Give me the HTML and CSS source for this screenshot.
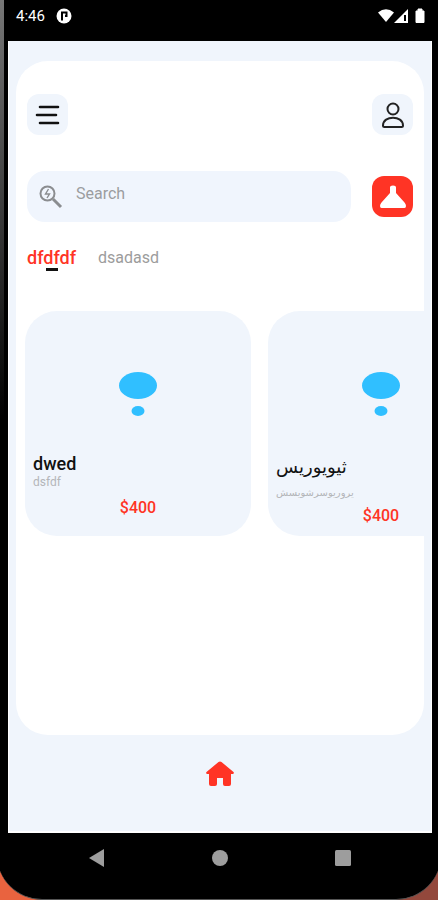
FILE: index.html
```html
<!DOCTYPE html>
<html lang="en">
<head>
<meta charset="utf-8">
<meta name="viewport" content="width=device-width, initial-scale=1">
<title>Shop</title>
<link rel="stylesheet" href="styles.css">
</head>
<body>
<div class="device">
  <header class="status">
    <span class="status-left">
      <span>4:46</span>
      <svg width="16" height="16" viewBox="0 0 16 16" aria-hidden="true"><circle cx="8" cy="8" r="7.500" fill="#fff"/><path d="M6 12.500V4.500h4.500v3.500H9" fill="none" stroke="#000" stroke-width="2"/></svg>
    </span>
    <svg width="48" height="16" viewBox="0 0 48 16" fill="#fff" aria-hidden="true"><path d="M0 4.500Q8-2 16 4.500L8 14Z"/><path d="M16 15L30 1v14Z"/><path d="M27 7v6" stroke="#000" stroke-width="2"/><path d="M38 3h2V1h4v2h2v11.500h-8Z" stroke="#fff" stroke-linejoin="round"/></svg>
  </header>
  <div class="screen">
    <main class="panel">
      <div class="row top">
        <button class="tile" type="button" aria-label="Menu"><svg width="25" height="20" viewBox="0 0 25 20" fill="none" stroke="#111" stroke-width="2.600" stroke-linecap="round"><path d="M5 2h18M2 10h19M5 18h18"/></svg></button>
        <button class="tile" type="button" aria-label="Profile"><svg width="22" height="26" viewBox="0 0 22 26" fill="none" stroke="#222" stroke-width="2"><circle cx="11" cy="7" r="5.500"/><path d="M1 23.500C1 13 21 13 21 23.500Q21 25 19.500 25h-17Q1 25 1 23.500Z"/></svg></button>
      </div>
      <div class="row find">
        <label class="search">
          <svg width="24" height="24" viewBox="0 0 24 24" fill="none" stroke="#8b8d90" aria-hidden="true"><circle cx="8.500" cy="8.500" r="7" stroke-width="2"/><path d="M14 14l8 8" stroke-width="3"/><path d="M9.500 4L6.500 9h4L8 13" stroke-width="1.400"/></svg>
          <input type="search" placeholder="Search" aria-label="Search">
        </label>
        <button class="tile accent" type="button" aria-label="Filter"><svg width="26" height="24" viewBox="0 0 26 24" fill="#fff"><path d="M10 2.500Q10 .5 13 .5t3 2V8l8.500 9.500q1.500 1.500 1.500 3.500Q26 23 24.500 23h-23Q0 23 0 21q0-2 1.500-3.500L10 8Z"/></svg></button>
      </div>
      <nav class="tabs">
        <a class="tab active" href="#one">dfdfdf</a>
        <a class="tab" href="#two">dsadasd</a>
      </nav>
      <section class="cards">
        <article class="card">
          <svg class="art" width="38" height="46" viewBox="0 0 38 46" fill="#30bfff" aria-hidden="true"><ellipse cx="19" cy="13.500" rx="19" ry="13.500"/><ellipse cx="19" cy="39" rx="6.500" ry="5"/></svg>
          <h2>dwed</h2>
          <p class="note">dsfdf</p>
          <p class="price">$400</p>
        </article>
        <article class="card">
          <svg class="art" width="38" height="46" viewBox="0 0 38 46" fill="#30bfff" aria-hidden="true"><ellipse cx="19" cy="13.500" rx="19" ry="13.500"/><ellipse cx="19" cy="39" rx="6.500" ry="5"/></svg>
          <h2 class="arabic" lang="ar">ثيويوريس</h2>
          <p class="note arabic" lang="ar">يروريوسرشويسش</p>
          <p class="price">$400</p>
        </article>
      </section>
    </main>
    <nav class="dock"><a href="#home" aria-label="Home"><svg width="28" height="25" viewBox="0 0 28 25" fill="#ff3425"><path d="M12.500 1Q14-.2 15.500 1L27.500 11q1 1.500-.5 2h-2v10q0 2-2 2h-4q-2 0-2-2v-6h-6v6q0 2-2 2H5q-2 0-2-2V13H1q-1.500-.5-.5-2Z"/></svg></a></nav>
  </div>
  <nav class="system">
    <button type="button" aria-label="Back"><svg width="18" height="18" viewBox="0 0 18 18" fill="#9d9d9d"><path d="M1 9L16 0v18Z"/></svg></button>
    <button type="button" aria-label="Home screen"><svg width="18" height="18" viewBox="0 0 18 18" fill="#9d9d9d"><circle cx="9" cy="9" r="8"/></svg></button>
    <button type="button" aria-label="Recent apps"><svg width="18" height="18" viewBox="0 0 18 18" fill="#9d9d9d"><rect x="1" y="1" width="16" height="16" rx="1.500"/></svg></button>
  </nav>
</div>
</body>
</html>
```
FILE: styles.css
```css
* { box-sizing: border-box; }

body {
  margin: 0;
  overflow-x: hidden;
  background: linear-gradient(90deg, #e9633f 20%, #93483c 90%);
  font-family: Roboto, "Noto Sans", "DejaVu Sans", sans-serif;
}

h2, p { margin: 0; }

button {
  padding: 0;
  border: 0;
  background: none;
}

svg { display: block; }

.device {
  display: flex;
  flex-direction: column;
  min-height: 100vh;
  margin: 0 -3px;
  padding: 0 9px 0 11px;
  border-bottom: 1px solid #555;
  border-radius: 0 0 45px 45px;
  background:
    linear-gradient(#777, #000) 0 0 / 7px 420px no-repeat,
    #000;
}

.status {
  display: flex;
  justify-content: space-between;
  height: 41px;
  padding: 8px 6px 0 8px;
  color: #fff;
  font-size: 15px;
  line-height: 16px;
}

.status-left {
  display: flex;
  gap: 11px;
}

.screen {
  display: flex;
  flex: 1;
  flex-direction: column;
  padding: 20px 7px 0;
  border: solid #fff;
  border-width: 0 1px 2px;
  background: #f0f5fc;
}

.panel {
  flex: 1;
  padding: 33px 0 0 11px;
  border-radius: 32px;
  overflow: hidden;
  background: #fff;
}

.row {
  display: flex;
  align-items: center;
  justify-content: space-between;
  padding-right: 11px;
}

.tile {
  display: grid;
  place-items: center;
  width: 41px;
  height: 41px;
  border-radius: 12px;
  background: #f0f5fc;
}

.accent { background: #ff3425; }

.find {
  gap: 21px;
  margin-top: 36px;
}

.search {
  display: flex;
  flex: 1;
  align-items: center;
  gap: 13px;
  height: 51px;
  padding: 0 12px;
  border-radius: 18px;
  background: #f0f5fd;
}

.search input {
  flex: 1;
  min-width: 0;
  padding: 0 0 6px;
  border: 0;
  outline: 0;
  background: none;
  font: 16px/20px Roboto, sans-serif;
}

.search input::placeholder { color: #9b9da0; }

.tabs {
  display: flex;
  gap: 22px;
  margin-top: 24px;
}

.tab {
  color: #9c9c9c;
  font-size: 16px;
  line-height: 24px;
  text-decoration: none;
}

.active {
  color: #ff3425;
  font-size: 18px;
  font-weight: 500;
}

.active::after {
  content: "";
  display: block;
  width: 12px;
  height: 3px;
  margin: -2px auto 0;
  background: #111;
}

.cards {
  display: flex;
  gap: 17px;
  margin: 40px 0 0 -2px;
  overflow: hidden;
}

.card {
  display: flex;
  flex: 0 0 226px;
  flex-direction: column;
  height: 225px;
  padding: 61px 8px 0;
  border-radius: 32px;
  background: #f0f5fc;
}

.art { align-self: center; }

.card h2 {
  margin-top: 35px;
  color: #111;
  font-size: 18px;
  font-weight: 500;
  line-height: 22px;
}

.note {
  color: #b4b6b9;
  font-size: 12px;
  line-height: 14px;
}

.price {
  margin-top: 9px;
  color: #ff3425;
  font-size: 16px;
  font-weight: 500;
  line-height: 20px;
  text-align: center;
}

.card .arabic {
  font-family: "DejaVu Sans", sans-serif;
  font-weight: 400;
}

.card h2.arabic {
  font-size: 18px;
  line-height: 28px;
}

.note.arabic {
  margin-top: 6px;
  font-size: 10px;
  line-height: 12px;
}

.note.arabic + .price { margin-top: 7px; }

.dock {
  display: flex;
  justify-content: center;
  padding: 26px 0 45px;
}

.system {
  display: flex;
  justify-content: space-between;
  padding: 16px 80px 32px;
}
```
